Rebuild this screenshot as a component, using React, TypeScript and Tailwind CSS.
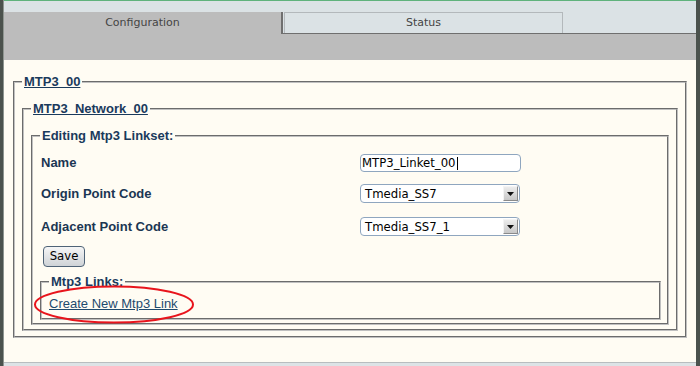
import React from "react";

const legendCls =
  "px-[2px] leading-[16px] text-[13px] font-bold text-[#1a3a5c] font-['Liberation_Sans',Arial,sans-serif]";
const fsCls = "border-2 [border-style:groove] border-[#c0c0c0] min-w-0";

function SelectBox({ value }: { value: string }) {
  return (
    <div className="flex h-[19px] w-[160px] items-center justify-between rounded-[4px] border border-[#8fa6bf] bg-white pl-[4px] pr-[1px]">
      <span className="text-[11.7px] leading-[14px] text-black font-['DejaVu_Sans',sans-serif]">{value}</span>
      <span className="flex h-[15px] w-[15px] items-center justify-center border border-t-[#f4f4f4] border-l-[#f4f4f4] border-r-[#8a8a8a] border-b-[#8a8a8a] bg-gradient-to-b from-[#ececec] to-[#c8c8c8]">
        <svg width="7" height="4" viewBox="0 0 7 4">
          <path d="M0 0 H7 L3.5 4 Z" fill="#111" />
        </svg>
      </span>
    </div>
  );
}

export default function App() {
  return (
    <div className="relative flex h-[366px] w-[700px] overflow-hidden bg-[#dde3e6]">
      {/* left dark strip */}
      <div className="h-full w-[3px] bg-[#4b524d]" />
      <div className="h-full w-[1px] bg-[#8e9590]" />

      {/* main column */}
      <div className="flex h-full flex-1 flex-col">
        {/* tab header */}
        <div className="flex h-[34px] items-end border-t border-[#5fb27c] bg-[#dbe2e5]">
          <div className="flex h-[22px] w-[279px] items-center justify-center border-r-2 border-[#6f6f6f] bg-[#bcbcbc] text-[11px] text-[#444] font-['DejaVu_Sans',sans-serif]">
            Configuration
          </div>
          <div className="flex h-[22px] flex-1 items-end border-b border-[#6f6f6f]">
            <div className="ml-[1px] flex h-[21px] w-[279px] items-center justify-center border border-b-0 border-[#b3b8bb] bg-[#dbe2e5] text-[11px] text-[#444] font-['DejaVu_Sans',sans-serif]">
              Status
            </div>
          </div>
        </div>
        {/* gray bar */}
        <div className="h-[26px] bg-[#bcbcbc]" />

        {/* content */}
        <div className="flex-1 bg-[#fffcf3] pt-[14px]">
          <fieldset className={`${fsCls} mx-[9px] px-[7px] pt-[11px] pb-[5px]`}>
            <legend className={legendCls}>
              <span className="underline">MTP3_00</span>
            </legend>
            <fieldset className={`${fsCls} px-[7px] pt-[11px] pb-[4px]`}>
              <legend className={legendCls}>
                <span className="underline">MTP3_Network_00</span>
              </legend>
              <fieldset className={`${fsCls} pl-[7px] pr-[6px] pt-0 pb-[3px]`}>
                <legend className={legendCls}>Editing Mtp3 Linkset:</legend>
                <div className="flex flex-col">
                  <div className="mt-[10px] flex h-[18px] items-center">
                    <div className="w-[320px] pl-[1px] text-[13px] font-bold text-[#1b3652] font-['Liberation_Sans',Arial,sans-serif]">
                      Name
                    </div>
                    <div className="flex h-[18px] w-[161px] items-center rounded-[4px] border border-[#8fa6bf] bg-white pl-[1px]">
                      <span className="text-[11.7px] leading-[14px] text-black font-['DejaVu_Sans',sans-serif]">
                        MTP3_Linket_00
                      </span>
                      <span className="ml-[1px] h-[13px] w-[1px] bg-black" />
                    </div>
                  </div>
                  <div className="mt-[12px] flex h-[19px] items-center">
                    <div className="w-[320px] pl-[1px] text-[13px] font-bold text-[#1b3652] font-['Liberation_Sans',Arial,sans-serif]">
                      Origin Point Code
                    </div>
                    <SelectBox value="Tmedia_SS7" />
                  </div>
                  <div className="mt-[14px] flex h-[19px] items-center">
                    <div className="w-[320px] pl-[1px] text-[13px] font-bold text-[#1b3652] font-['Liberation_Sans',Arial,sans-serif]">
                      Adjacent Point Code
                    </div>
                    <SelectBox value="Tmedia_SS7_1" />
                  </div>
                  <div className="mt-[10px] flex">
                    <button className="ml-[3px] flex h-[21px] w-[42px] items-center justify-center rounded-[4px] border border-[#4f6377] bg-gradient-to-b from-[#f6f6f6] to-[#cfd3d7] text-[11.7px] text-black font-['DejaVu_Sans',sans-serif]">
                      Save
                    </button>
                  </div>
                  <fieldset className={`${fsCls} mt-[7px] pl-[7px] pr-[7px] pt-[6px] pb-[6px]`}>
                    <legend className={legendCls}>Mtp3 Links:</legend>
                    <a className="block text-[13px] leading-[16px] text-[#1e4a6e] underline font-['Liberation_Sans',Arial,sans-serif]">
                      Create New Mtp3 Link
                    </a>
                  </fieldset>
                </div>
              </fieldset>
            </fieldset>
          </fieldset>
        </div>

        {/* bottom strip */}
        <div className="h-[4px] border-t border-[#b8bdbf] bg-[#dde3e6]" />
      </div>

      {/* right dark strip */}
      <div className="h-full w-[4px] bg-[#4b524d]" />

      {/* red annotation ellipse */}
      <svg
        className="pointer-events-none absolute left-[32px] top-[284px]"
        width="164"
        height="41"
        viewBox="0 0 164 41"
      >
        <ellipse cx="82" cy="20.5" rx="79" ry="18" fill="none" stroke="#e8141c" strokeWidth="2" />
      </svg>
    </div>
  );
}
